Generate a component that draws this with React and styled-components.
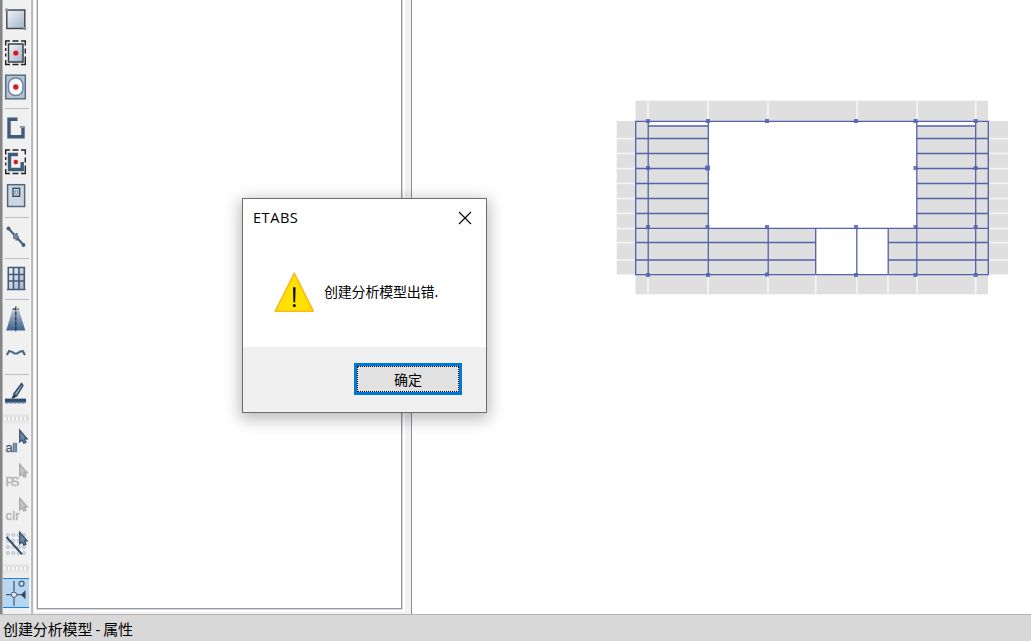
import React from 'react';
import styled, { createGlobalStyle, css } from 'styled-components';

const GlobalStyle = createGlobalStyle`
  * { box-sizing: border-box; }

  body {
    margin: 0;
    overflow: hidden;
    background: #fff;
    font-family: "Noto Sans", "Noto Sans CJK SC", sans-serif;
  }
`;

const Window = styled.div`
  width: 100%;
  height: 100vh;
  display: flex;
  flex-direction: column;
  position: relative;
`;

const Workspace = styled.div`
  flex: 1;
  min-height: 0;
  display: flex;
`;

const Toolbar = styled.div`
  width: 31px;
  flex: none;
  padding-top: 2px;
  background: #f0f0f0;
  border-left: 2px solid #858585;
  border-right: 1px solid #f8f8f8;
  box-shadow: inset 1px 0 0 #b8b8b8;
  display: flex;
  flex-direction: column;
`;

const Tool = styled.div`
  height: 34px;
  margin: 0 1px;
  flex: none;

  svg { display: block; }

  ${({ $active }) => $active && css`
    height: 30px;
    background: #b5d7f3;
    border-top: 1px solid #1683dc;
    border-bottom: 1px solid #1683dc;

    svg { margin-top: -3px; }
  `}
`;

const Separator = styled.div`
  height: 7px;
  flex: none;
  margin: 0 1px 0 3px;
  padding-top: 4px;

  &::before {
    content: '';
    display: block;
    height: 1px;
    background: #bdbdbd;
  }
`;

const Grip = styled.div`
  height: ${({ $height }) => $height}px;
  flex: none;
  margin: 0 1px;
  padding: 6px 1px 0;
  background: linear-gradient(#f0f0f0 0 3px, #e2e2e2 4px, #e6e6e6 10px, #f0f0f0);

  &::before {
    content: '';
    display: block;
    height: 3px;
    background: repeating-linear-gradient(90deg, #fafafa 0 2px, #d8d8d8 2px 4px);
  }
`;

const SidePane = styled.div`
  width: 380px;
  flex: none;
  padding: 0 9px 3px 4px;
  background: #f2f2f2;
  border-left: 2px solid #bcbcbc;
  display: flex;
`;

const PaneBody = styled.div`
  flex: 1;
  margin-bottom: 2px;
  background: #fff;
  border: solid #949aa4;
  border-width: 0 1px 1px;
  box-shadow: 0 0 0 1px #d5d8dd, 0 0 0 3px #fff;
`;

const Canvas = styled.div`
  flex: 1;
  min-width: 0;
  background: #fff;
  border-left: 1px solid #8e8e8e;
  padding: 96px 0 0 201px;

  svg { display: block; }
`;

const StatusBar = styled.div`
  height: 27px;
  flex: none;
  padding: 2px 0 0 3px;
  background: #d8d8d8;
  border-top: 1px solid #b2b2b2;
  color: #000;
  font-size: 15px;
  line-height: 24px;
  letter-spacing: -0.1px;
  word-spacing: -0.8px;
  white-space: nowrap;
`;

const Dialog = styled.div`
  position: absolute;
  left: 242px;
  top: 198px;
  width: 245px;
  height: 215px;
  display: flex;
  flex-direction: column;
  background: #fff;
  border: 1px solid #6c6c6c;
  box-shadow: 0 4px 15px 2px rgba(0, 0, 0, 0.28);
`;

const DialogTitle = styled.div`
  height: 38px;
  padding: 0 14px 0 10px;
  display: flex;
  align-items: center;
  justify-content: space-between;
  font-family: "Open Sans", sans-serif;
  font-size: 14.6px;
  letter-spacing: 0.5px;
  color: #000;

  span { margin-top: -2px; }
`;

const DialogMessage = styled.div`
  flex: 1;
  display: flex;
  align-items: flex-start;
  padding: 35px 0 0 31px;
  gap: 9px;
  font-size: 14px;
  line-height: 20px;
  letter-spacing: -0.2px;
  color: #000;

  span { margin-top: 10px; }
`;

const DialogFooter = styled.div`
  height: 65px;
  padding: 16px 24px 0 0;
  background: #f0f0f0;
  display: flex;
  justify-content: flex-end;
`;

const OkButton = styled.button`
  width: 108px;
  height: 32px;
  padding: 0;
  border: 3px solid #0078d7;
  background: #e1e1e1;
  font: 14px/26px "Noto Sans CJK SC", sans-serif;
  color: #000;
  outline: 1px dotted #000;
  outline-offset: -4px;
`;

const DARK = '#3f5b78';
const BLUE = '#5262ab';

const Icon = ({ children }) => (
  <svg width="26" height="34" viewBox="0 0 26 34" fill="none">{children}</svg>
);

const Shades = () => (
  <svg width="0" height="0" style={{ position: 'absolute' }}>
    <defs>
      <linearGradient id="plate" x1="0" y1="0" x2="1" y2="1">
        <stop offset="0" stopColor="#f2f5f8" />
        <stop offset="1" stopColor="#a2b2c5" />
      </linearGradient>
      <linearGradient id="tower" x1="0" y1="0" x2="0" y2="1">
        <stop offset="0" stopColor="#afc0d2" />
        <stop offset="1" stopColor="#3e628c" />
      </linearGradient>
    </defs>
  </svg>
);

const Cursor = ({ color = '#344d6b', fill = '#6e87a4' }) => (
  <path d="M16.7 5.2V17l2.5-2.1 1.7 3.3 2.1-1-1.6-3.3h2.8Z" fill={fill} stroke={color} strokeWidth="1.2" />
);

const Dashes = () => (
  <path
    d="M2.7 9.5V5H7M9.5 5H15.5M18 5H22.3V9.5M22.3 12.5V17.5M22.3 20.5V28.5H18M15.5 28.5H9.5M7 28.5H2.7V24M2.7 20.5V17.5M2.7 15V12"
    stroke="#222" strokeWidth="1.4"
  />
);

const AreaIcon = () => (
  <Icon>
    <rect x="3.8" y="8" width="18" height="18.5" fill="url(#plate)" stroke="#3c424a" strokeWidth="1.4" />
    <circle cx="3.8" cy="8" r="1.7" fill="#7890ac" />
    <circle cx="21.6" cy="26.5" r="1.7" fill="#7890ac" />
  </Icon>
);

const QuickAreaIcon = () => (
  <Icon>
    <Dashes />
    <rect x="5.5" y="8" width="14.5" height="18" fill="url(#plate)" stroke="#343e49" strokeWidth="1.5" />
    <circle cx="12.8" cy="17" r="2.6" fill="#d91a22" />
  </Icon>
);

const AroundPointIcon = () => (
  <Icon>
    <rect x="2.7" y="5.2" width="19.6" height="23.6" fill="#b3c2d3" stroke="#5b6f86" strokeWidth="1.5" />
    <rect x="5.5" y="8" width="14.4" height="17.5" rx="6.8" fill="#fafafa" stroke="#6f8398" strokeWidth="1.4" />
    <circle cx="12.8" cy="17" r="2.7" fill="#d91a22" />
  </Icon>
);

const WallIcon = () => (
  <Icon>
    <path d="M14.5 8.2H6V25.8H20V17" stroke={DARK} strokeWidth="3.4" />
    <path d="M17 16H22" stroke={DARK} strokeWidth="1.2" />
  </Icon>
);

const QuickWallIcon = () => (
  <Icon>
    <Dashes />
    <path d="M15 9.5H6.5V24.5H19.2V17" stroke={DARK} strokeWidth="3.4" />
    <circle cx="12.8" cy="17" r="2.3" fill="#d91a22" />
  </Icon>
);

const OpeningIcon = () => (
  <Icon>
    <rect x="4.6" y="5.7" width="17" height="21.8" fill="#ccd7e2" stroke="#52677f" strokeWidth="1.5" />
    <rect x="10" y="9.3" width="6.6" height="8" fill="#dbe4eb" stroke="#354a60" strokeWidth="1.4" />
    <ellipse cx="13.3" cy="13.3" rx="1.5" ry="2" stroke="#607891" />
  </Icon>
);

const LinkIcon = () => (
  <Icon>
    <path d="M5.5 8.5 20.5 25M10 17.5h6M13.5 13v7.5" stroke="#435e7a" strokeWidth="2" />
    <circle cx="5.5" cy="8.5" r="1.9" fill="#455e78" />
    <circle cx="20.5" cy="25" r="1.9" fill="#455e78" />
    <circle cx="12.8" cy="16.7" r="2.6" fill="#718499" />
  </Icon>
);

const GridIcon = () => (
  <Icon>
    <rect x="5.3" y="6.5" width="16" height="22" fill="url(#plate)" />
    <path d="M5.3 29V6.5H21.3V29M10.5 6.5V28M16 6.5V28M5 13.5H21.5M5 20H21.5M4 28.5H22.5" stroke="#405a77" strokeWidth="1.6" />
  </Icon>
);

const TowerIcon = () => (
  <Icon>
    <path d="M9.2 8.5h7L22.3 28.5H3.2Z" fill="url(#tower)" />
    <path d="M12.8 4.5V30M9.5 7.2h6.6" stroke="#26313e" strokeWidth="1.3" strokeDasharray="4 1" />
  </Icon>
);

const WaveIcon = () => (
  <Icon>
    <path d="m3.8 19 2.4-4q3 .5 5.2 2.5h2.8q2.5-2.3 5.4-2.5l2.4 4" stroke="#4b6684" strokeWidth="2.2" />
  </Icon>
);

const BrushIcon = () => (
  <Icon>
    <path d="M10.8 17 18.6 6.5l1.3 2L13.6 19Z" fill="#94a9bd" stroke="#324960" strokeWidth="1.4" />
    <path d="m8.3 21.3 2.3-3.8 3 1.3-2.2 2.5Z" fill="#293c51" />
    <rect x="2" y="21.6" width="21" height="4" fill="#314c70" />
    <path d="M2.5 25.6h20" stroke="#6881a0" strokeWidth="1.8" strokeDasharray="3 1" />
  </Icon>
);

const IconText = styled.text`
  font: 13px "Liberation Sans", sans-serif;
`;

const SelectIcon = ({ label, muted }) => (
  <Icon>
    <IconText
      x="2.5"
      y="27"
      textLength={label === 'all' ? 12 : 14}
      fill={muted ? '#b4b4b4' : '#4c6681'}
      stroke={muted ? '#b4b4b4' : '#4c6681'}
      strokeWidth="0.4"
    >
      {label}
    </IconText>
    {muted ? <Cursor color="#a5a5a5" fill="#c4c4c4" /> : <Cursor />}
  </Icon>
);

const DeselectLineIcon = () => (
  <Icon>
    {[8, 13.8, 20, 26].map((y) => [5, 10.3, 15.7, 21].map((x) => (
      <circle key={`${x}-${y}`} cx={x} cy={y} r="1.4" stroke="#a9b9c9" strokeWidth="1" />
    )))}
    <path d="m3.5 10 15.5 17.3" stroke="#304c69" strokeWidth="2" />
    <Cursor />
  </Icon>
);

const SnapIcon = () => (
  <Icon>
    <path d="M11 5V15.5M11 21.5V30M3 18.7H8.2M13.8 18.7H18" stroke="#4d5e71" strokeWidth="1.3" />
    <circle cx="11" cy="18.7" r="2.7" fill="#d8e8f6" stroke="#4d5e71" />
    <circle cx="18.6" cy="7.7" r="2.5" stroke="#4d5e71" strokeWidth="1.2" />
    <path d="M22.5 14.2v9l-4.7-4.5Z" fill="#33475b" />
  </Icon>
);

// slab outline and strips, in model view coordinates
const ROWS = [138.5, 153.5, 168.5, 183.5, 198.5, 213.5];
const ALL_ROWS = [...ROWS, 228.5, 242.5, 260];
const JOINTS = [
  [648, 121], [708, 121], [767, 121], [856, 121], [915.5, 121], [975.7, 121],
  [648, 168], [707.5, 168, 5], [915.5, 168], [975.7, 168],
  [648, 227], [707.5, 227], [767, 227], [856, 227], [915.5, 227], [975.7, 227],
  [648, 275], [708, 275], [767, 274.5], [856, 275], [915.5, 275], [975.7, 275],
];

const PlanView = () => (
  <svg width="400" height="202" viewBox="613 96 400 202" fill="none">
    <g fill="#dfdfdf">
      <rect x="635.5" y="100.7" width="352.5" height="193.6" />
      <rect x="616.7" y="121" width="391.3" height="153.5" />
    </g>
    <g stroke="#f6f6f6" strokeWidth="1.6">
      {[648, 708, 768, 857, 917, 975.7].map((x) => <path key={x} d={`M${x} 100V121M${x} 275V295`} />)}
      <path d="M815.7 275V295M888 275V295" />
      {ALL_ROWS.map((y) => <path key={y} d={`M616 ${y}H635M989 ${y}H1008`} />)}
    </g>
    <g fill="#fff">
      <rect x="708.5" y="121" width="208.5" height="107" />
      <rect x="648" y="121" width="60" height="5" />
      <rect x="917" y="121" width="59" height="5" />
      <rect x="816" y="228.5" width="72" height="46" />
    </g>
    <g stroke={BLUE} strokeWidth="1.3">
      <path d="M635.7 121.3H988.3V274.6H635.7Z" />
      <path d="M648.2 121V275M708.3 121V275M768.2 228V275M815.7 228V275M856.8 228V275M888.2 228V275M916.8 121V275M975.7 121V275" />
      <path d="M648 126H708M917 126H976M636 228.4H988" />
      {ROWS.map((y) => <path key={y} d={`M636 ${y}H708M917 ${y}H988`} />)}
      <path d="M636 242.5H816M888 242.5H988M636 260H816M888 260H988" />
    </g>
    <g fill={BLUE} fillOpacity="0.85">
      {JOINTS.map(([x, y, size = 4]) => (
        <rect key={`${x}-${y}`} x={x - size / 2} y={y - size / 2} width={size} height={size} />
      ))}
    </g>
  </svg>
);

const WarningIcon = () => (
  <svg width="41" height="41" viewBox="0 0 41 41">
    <path d="M20.3 1.3 39.3 39.2H1.3Z" fill="#ffe100" stroke="#fcb91f" strokeWidth="1.6" strokeLinejoin="round" />
    <path d="M19 15.3h2.6l-.4 15h-1.8Z" fill="#111" />
    <rect x="18.9" y="32.2" width="2.8" height="2.7" rx="0.6" fill="#111" />
  </svg>
);

const App = () => {
  return (
    <Window>
      <GlobalStyle />
      <Shades />
      <Workspace>
        <Toolbar>
          <Tool><AreaIcon /></Tool>
          <Tool><QuickAreaIcon /></Tool>
          <Tool><AroundPointIcon /></Tool>
          <Separator />
          <Tool><WallIcon /></Tool>
          <Tool><QuickWallIcon /></Tool>
          <Tool><OpeningIcon /></Tool>
          <Separator />
          <Tool><LinkIcon /></Tool>
          <Separator />
          <Tool><GridIcon /></Tool>
          <Separator />
          <Tool><TowerIcon /></Tool>
          <Tool><WaveIcon /></Tool>
          <Separator />
          <Tool><BrushIcon /></Tool>
          <Grip $height={14} />
          <Tool><SelectIcon label="all" /></Tool>
          <Tool><SelectIcon label="PS" muted /></Tool>
          <Tool><SelectIcon label="clr" muted /></Tool>
          <Tool><DeselectLineIcon /></Tool>
          <Grip $height={17} />
          <Tool $active><SnapIcon /></Tool>
        </Toolbar>
        <SidePane>
          <PaneBody />
        </SidePane>
        <Canvas>
          <PlanView />
        </Canvas>
      </Workspace>
      <StatusBar>创建分析模型 - 属性</StatusBar>
      <Dialog>
        <DialogTitle>
          <span>ETABS</span>
          <svg width="14" height="14" viewBox="0 0 14 14">
            <path d="m1 1 12 12M13 1 1 13" stroke="#000" strokeWidth="1.1" />
          </svg>
        </DialogTitle>
        <DialogMessage>
          <WarningIcon />
          <span>创建分析模型出错.</span>
        </DialogMessage>
        <DialogFooter>
          <OkButton>确定</OkButton>
        </DialogFooter>
      </Dialog>
    </Window>
  );
}

export default App;
